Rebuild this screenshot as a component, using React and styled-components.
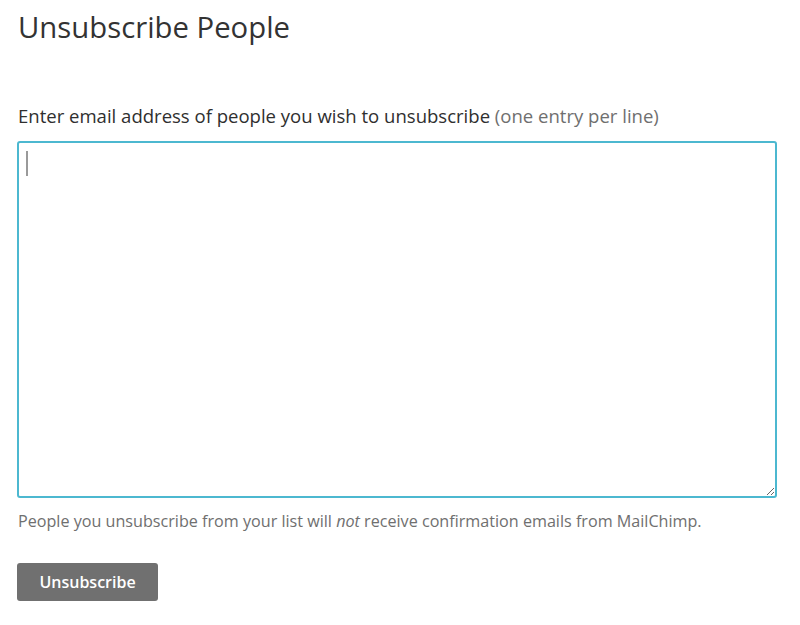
import React from 'react';
import styled, { createGlobalStyle } from 'styled-components';

const GlobalStyle = createGlobalStyle`
  body {
    margin: 0;
    background: #ffffff;
    font-family: "Open Sans", "Liberation Sans", sans-serif;
    color: #333333;
  }
`;

const Page = styled.div`
  padding: 8px 23px 0 17px;
`;

const Title = styled.h1`
  margin: 0 0 0 1px;
  font-size: 29.3px;
  font-weight: 400;
  line-height: 38px;
  color: #333333;
`;

const Form = styled.form`
  margin-top: 58px;
  display: flex;
  flex-direction: column;
`;

const Label = styled.label`
  margin-left: 1px;
  font-size: 18.55px;
  line-height: 24px;
  color: #2f2f2f;
`;

const Hint = styled.span`
  color: #6f6f6f;
`;

const Field = styled.div`
  position: relative;
  margin-top: 13px;
  width: 760px;
`;

const EmailBox = styled.textarea`
  display: block;
  box-sizing: border-box;
  width: 760px;
  height: 357px;
  border: 2px solid #4cb8d0;
  border-radius: 3px;
  padding: 8px;
  font-family: "Open Sans", "Liberation Sans", sans-serif;
  font-size: 18px;
  line-height: 26px;
  color: #333333;
  outline: none;
  resize: vertical;
`;

const Caret = styled.span`
  position: absolute;
  left: 9px;
  top: 10px;
  width: 2px;
  height: 25px;
  background: #9a9a9a;
  pointer-events: none;
`;

const Note = styled.p`
  margin: 12px 0 0 1px;
  font-size: 16.15px;
  line-height: 22px;
  color: #6f6f6f;
`;

const Button = styled.button`
  margin-top: 31px;
  align-self: flex-start;
  width: 141px;
  height: 38px;
  border: none;
  border-radius: 3px;
  background: #707070;
  color: #ffffff;
  font-family: "Open Sans", "Liberation Sans", sans-serif;
  font-size: 16px;
  font-weight: 600;
  cursor: pointer;
`;

export default function App() {
  return (
    <>
      <GlobalStyle />
      <Page>
        <Title>Unsubscribe People</Title>
        <Form onSubmit={e => e.preventDefault()}>
          <Label htmlFor="emails">
            Enter email address of people you wish to unsubscribe <Hint>(one entry per line)</Hint>
          </Label>
          <Field>
            <EmailBox id="emails" />
            <Caret />
          </Field>
          <Note>
            People you unsubscribe from your list will <em>not</em> receive confirmation emails from MailChimp.
          </Note>
          <Button type="submit">Unsubscribe</Button>
        </Form>
      </Page>
    </>
  );
}
